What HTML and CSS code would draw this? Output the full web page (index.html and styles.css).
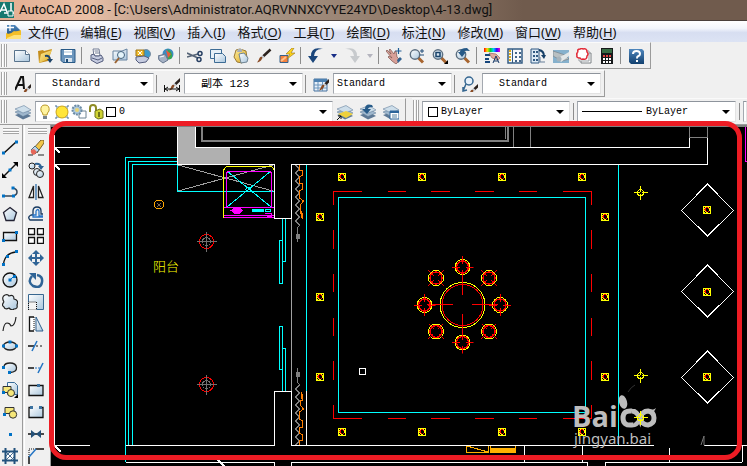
FILE: index.html
```html
<!DOCTYPE html>
<html lang="zh-CN">
<head>
<meta charset="utf-8">
<title>AutoCAD 2008</title>
<link rel="stylesheet" href="styles.css">
</head>
<body>
<svg class="defs" aria-hidden="true">
  <defs>
    <linearGradient id="pane" x1="0" y1="0" x2="1" y2="1"><stop offset="0" stop-color="#fff"/><stop offset="1" stop-color="#a9c6dd"/></linearGradient>
    <linearGradient id="gold" x1="0" y1="0" x2="1" y2="1"><stop offset="0" stop-color="#fff0a0"/><stop offset="1" stop-color="#dba51c"/></linearGradient>
    <linearGradient id="navy" x1="0" y1="0" x2="0" y2="1"><stop offset="0" stop-color="#4f87bd"/><stop offset="1" stop-color="#12406f"/></linearGradient>
    <linearGradient id="rainbow"><stop offset="0" stop-color="#f00"/><stop offset=".2" stop-color="#fd0"/><stop offset=".4" stop-color="#0c3"/><stop offset=".6" stop-color="#0cf"/><stop offset=".8" stop-color="#30f"/><stop offset="1" stop-color="#f0c"/></linearGradient>
    <symbol id="brush" viewBox="0 0 16 16"><path d="M14.500 1.500L7 8.500" stroke="#2a211d" stroke-width="2.500"/><path d="M7.500 8L5.500 10" stroke="#c9ced3" stroke-width="3"/><path d="M6.500 9.500Q5 14 1 14.500Q3 12 3.500 10Q5 8 6.500 9.500" fill="#8a4b24"/></symbol>
    <symbol id="lens" viewBox="0 0 16 16"><path d="M9 9.500l5 5" stroke="#a8652f" stroke-width="3"/><circle cx="6" cy="6.500" r="4.700" fill="url(#pane)" stroke="#5d6f80" stroke-width="1.400"/></symbol>
    <symbol id="printer" viewBox="0 0 16 16"><path d="M4 1h6l1 7H5z" fill="#fff" stroke="#737c94"/><path d="M5.500 3h4M6 5h4" stroke="#737c94"/><path d="M2 7l3-1 1 2h4l2-1 2 3v3l-6 2.500L2 12z" fill="#c6cce0" stroke="#535c7c"/><path d="M3 10l6 2 4-2" stroke="#535c7c" fill="none"/></symbol>
    <symbol id="layers" viewBox="0 0 16 16"><path d="M0 11l9-3 7 4-8 3.500z" fill="#5d7895"/><path d="M0 8l9-3 7 4-8 3.500z" fill="#9fb7cd" stroke="#597793" stroke-width=".5"/><path d="M0 5l9-3.500L16 6 8 9z" fill="#cddeea" stroke="#66829e" stroke-width=".6"/></symbol>
    <symbol id="spot" viewBox="0 0 8 8"><path d="M0 0h8v8H0z" fill="#ff0"/><path d="M1 1h1v1H1zM6 1h1v1H6zM1 5h1v1H1zM6 5h1v2H5V6h1zM2 6h1v1H2zM3 2h2v1h1v2H5v1H3V5H2V3h1z" fill="#000"/><path d="M3 1h2v1H3zM2 2h1v1H2zM1 3h2v1H1zM2 4h1v1H2zM3 5h1v1H3zM5 2h1v1H5zM5 5h1v1H5z" fill="#f00"/></symbol>
    <symbol id="seat" viewBox="0 0 22 22"><circle cx="11" cy="11" r="7.500" stroke="#ff0"/><circle cx="11" cy="11" r="6" stroke="#f00" stroke-width="1.500"/><path d="M11 0v8M11 14v8M0 11h8M14 11h8" stroke="#f00"/></symbol>
    <symbol id="target" viewBox="0 0 22 22"><circle cx="11" cy="11" r="7" stroke="#f00"/><circle cx="11" cy="11" r="4" stroke="#707070"/><path d="M11 1v20M1 11h20" stroke="#707070"/></symbol>
    <symbol id="lamp" viewBox="0 0 16 16"><circle cx="8" cy="8" r="3" stroke="#ff0"/><path d="M8 1v6M8 9v6M1 8h6M9 8h6" stroke="#ff0"/></symbol>
  </defs>
</svg>
<div class="app">
  <header class="title">
    <svg class="title-icon" viewBox="0 0 14 16" aria-hidden="true"><path d="M0 0h14v16H0z" fill="#16796f"/><path d="M0 10L4 2l3 8M1 8h5M11 1v11M4 11h10" stroke="#fff" stroke-width="1.500" fill="none"/><path d="M8 9h5v5H8z" fill="#16796f" stroke="#fff"/></svg>
    <h1>AutoCAD 2008 - [C:\Users\Administrator.AQRVNNXCYYE24YD\Desktop\4-13.dwg]</h1>
  </header>
  <nav class="menu">
    <svg class="menu-icon" viewBox="0 0 16 16" aria-hidden="true"><path d="M1 1h8l5 5v9H1z" fill="url(#navy)"/><path d="M4 0v7M0 3.500h8" stroke="#fff" stroke-width="1.300"/><path d="M0 9q4 2 8-2 2 1 7-1v9H0z" fill="#f4bf28"/><path d="M1 14l7-3h7v4H1z" fill="#ffe37c"/></svg>
    <button>文件(<u>F</u>)</button><button>编辑(<u>E</u>)</button><button>视图(<u>V</u>)</button><button>插入(<u>I</u>)</button><button>格式(<u>O</u>)</button><button>工具(<u>T</u>)</button><button>绘图(<u>D</u>)</button><button>标注(<u>N</u>)</button><button>修改(<u>M</u>)</button><button>窗口(<u>W</u>)</button><button>帮助(<u>H</u>)</button>
  </nav>

  <div class="dock">
    <div class="bar">
      <span class="grip"></span>
      <button class="tool" aria-label="新建"><svg viewBox="0 0 16 16"><path d="M.500 2.500h11l4 4v7H.500z" fill="url(#pane)" stroke="#58738c"/><path d="M11.500 2.500v4h4" fill="#fff" stroke="#58738c"/></svg></button>
      <button class="tool" aria-label="打开"><svg viewBox="0 0 16 16"><path d="M1 3l5-1 1 1 8-2-4 12-9 2z" fill="#c58e1c"/><path d="M4 6l11-4-4 9-9 4z" fill="url(#gold)"/><path d="M8 8q5-1 5 4" stroke="#1d4368" stroke-width="2" fill="none"/><path d="M10 11h6l-3 4z" fill="#1d4368"/></svg></button>
      <button class="tool" aria-label="保存"><svg viewBox="0 0 16 16"><path d="M1 1.500h14v13H3l-2-2z" fill="#6c96bd" stroke="#285985"/><path d="M4 2h8v5H4z" fill="#fff"/><path d="M4 4h8" stroke="#aac3d8"/><path d="M5 10h7v4H5z" fill="#d6e2ed"/><path d="M6 11h2v3H6z" fill="#204c76"/></svg></button>
      <span class="rule"></span>
      <button class="tool" aria-label="打印"><svg viewBox="0 0 16 16"><use href="#printer"/></svg></button>
      <button class="tool" aria-label="打印预览"><svg viewBox="0 0 16 16"><path d="M1 3h9l5-2v11H1z" fill="url(#pane)" stroke="#6683a0"/><circle cx="9" cy="7" r="3.500" fill="#e4f4fa" stroke="#44627d"/><path d="M7 10l-4 5" stroke="#9b6331" stroke-width="2"/></svg></button>
      <button class="tool" aria-label="发布"><svg viewBox="0 0 16 16"><circle cx="11" cy="6" r="4.500" fill="#3c9acb" stroke="#7c8da0"/><path d="M1 2h8v6H1z" fill="#f3bd29" stroke="#9c7418"/><path d="M3 3l4 4M7 3L3 7" stroke="#fff"/><path d="M1 9l8-1 5 2-3 4-7 1-3-3z" fill="#c6cce0" stroke="#535c7c"/></svg></button>
      <button class="tool" aria-label="三维 DWF"><svg viewBox="0 0 16 16"><circle cx="10" cy="6" r="5.500" fill="#3b8bc1"/><path d="M9 1q6 2 5 9-2 2-5 1 3-6 0-10" fill="#36a64d"/><path d="M8 2l5 4-3 4z" fill="#ea5b38"/><path d="M0 8l7-2 3 6-5 3-4-3z" fill="#a4b1c4" stroke="#65758d"/><path d="M2 9l4-1" stroke="#fff"/></svg></button>
      <span class="rule"></span>
      <button class="tool" aria-label="剪切"><svg viewBox="0 0 16 16" fill="none"><path d="M0 5l11 5M0 9l11-3" stroke="#566477" stroke-width="1.600"/><circle cx="13" cy="5.500" r="2" stroke="#273f62" stroke-width="1.500"/><circle cx="12" cy="11.500" r="2" stroke="#273f62" stroke-width="1.500"/></svg></button>
      <button class="tool" aria-label="复制"><svg viewBox="0 0 16 16"><path d="M.500 1.500h11v9H.500z" fill="#e6f0f7" stroke="#3d6c95"/><path d="M4.500 5.500h8l3 3v6h-11z" fill="url(#pane)" stroke="#3d6c95"/></svg></button>
      <button class="tool" aria-label="粘贴"><svg viewBox="0 0 16 16"><path d="M3 2l4-1 6 2 1 7-5 5-5-1-3-5z" fill="url(#gold)" stroke="#9a7a35"/><path d="M5 1h4v3H4z" fill="#a8afb6"/><path d="M6 6l5-1 4 5-1 4-6 1z" fill="url(#pane)" stroke="#6f8494"/></svg></button>
      <button class="tool" aria-label="特性匹配"><svg viewBox="0 0 16 16"><use href="#brush"/></svg></button>
      <button class="tool" aria-label="块编辑器"><svg viewBox="0 0 16 16"><path d="M1 7.500h8v7H1z" fill="#f5813d" stroke="#35618b"/><path d="M2 13l5-4" stroke="#ffc08a" stroke-width="2"/><path d="M13 0L7 6h4L8 11l8-6h-4l3-5z" fill="#ffd519" stroke="#99731b" stroke-width=".6"/></svg></button>
      <span class="rule"></span>
      <button class="tool" aria-label="放弃"><svg viewBox="0 0 16 16"><path d="M15 1Q7 0 6 8h4l-5 7-5-7h3Q3-2 15 1" fill="#1b467b"/></svg></button>
      <button class="tool mini" aria-label="放弃列表"><svg viewBox="0 0 8 8"><path d="M1 2h6L4 6z" fill="#182e87"/></svg></button>
      <button class="tool" aria-label="重做"><svg viewBox="0 0 16 16"><path d="M1 1Q9 0 10 8H6l5 7 5-7h-3Q13-2 1 1" fill="#c7cacd"/></svg></button>
      <button class="tool mini" aria-label="重做列表"><svg viewBox="0 0 8 8"><path d="M1 2h6L4 6z" fill="#b4b4be"/></svg></button>
      <span class="rule"></span>
      <button class="tool" aria-label="实时平移"><svg viewBox="0 0 16 16"><path d="M0 3l1-1 4 4-2-4 1-1 4 5 1-3h1l1 6 3 3-4 4-4-3-4-4 1-1 3 2z" fill="#d8a098" stroke="#7e554e" stroke-width=".7"/><path d="M11 12l3-3 2 2-4 4z" fill="#326290"/><path d="M12.500 0v6M9.500 3h6" stroke="#235f96" stroke-width="1.200"/></svg></button>
      <button class="tool" aria-label="实时缩放"><svg viewBox="0 0 16 16"><use href="#lens"/><path d="M13 1v4M11 3h4M11 7h4" stroke="#214c78"/></svg></button>
      <button class="tool" aria-label="窗口缩放"><svg viewBox="0 0 16 16"><use href="#lens"/><path d="M4 4.500h4v4H4z" fill="none" stroke="#19436b" stroke-width="1.500"/><path d="M16 12v4h-4z"/></svg></button>
      <button class="tool" aria-label="缩放上一个"><svg viewBox="0 0 16 16"><use href="#lens"/><path d="M12 0q-7 0-7 4H3l4 5 4-5H9q0-2 6-1z" fill="#265987"/></svg></button>
      <span class="rule"></span>
      <button class="tool" aria-label="特性"><svg viewBox="0 0 16 16"><path d="M0 0h16v4H0z" fill="url(#rainbow)"/><path d="M1 7h5M1 11h4M1 14h5" stroke="#16467c" stroke-width="2"/><path d="M5 5l7 1 4 4-2 2-6-2z" fill="#e2a99d" stroke="#85564c" stroke-width=".6"/><path d="M9 15l3-7 3 7M10 13h4" stroke="#173967" fill="none"/></svg></button>
      <button class="tool" aria-label="设计中心"><svg viewBox="0 0 16 16"><path d="M1 1h14v14H1z" fill="#f5f8fb" stroke="#345c84" stroke-width="1.500"/><path d="M5.500 1v14" stroke="#345c84"/><path d="M2 3h2M2 6h2M2 9h2M2 12h2" stroke="#dba91c" stroke-width="2"/><path d="M8 4h2v2H8zm4 0h2v2h-2zM8 8h2v2H8zm4 0h2v2h-2zm-4 4h2v2H8zm4 0h2v2h-2z" fill="#446589"/></svg></button>
      <button class="tool" aria-label="工具选项板"><svg viewBox="0 0 16 16"><path d="M1 1h8v14H1z" fill="#dce9f4" stroke="#315982"/><path d="M3 3h2v2H3zm3 0h2v2H6zM3 7h2v2H3zm3 0h2v2H6zM3 11h2v2H3zm3 0h2v2H6z" fill="#315982"/><path d="M9 2q5 1 5 6" fill="none" stroke="#173f67" stroke-width="2"/><path d="M11 7h5l-2 4z" fill="#173f67"/><path d="M10 9v5h5" stroke="#667f99" fill="none"/></svg></button>
      <button class="tool" aria-label="图纸集"><svg viewBox="0 0 16 16"><path d="M0 2h16v13H0z" fill="#86b1cd"/><path d="M0 3l12 4 4 4-7 2L0 8z" fill="#b9c0c2" stroke="#79848c" stroke-width=".7"/><path d="M5 10q6-3 11-6v4l-8 6z" fill="#e3e7e8"/><circle cx="6" cy="11" r="2.500" fill="#a6b3bb"/></svg></button>
      <button class="tool" aria-label="标记集"><svg viewBox="0 0 16 16"><path d="M5 5h10v10H5z" fill="#fff" stroke="#7b8084"/><path d="M3 3h10v10H3z" fill="#fff" stroke="#9aa0a5"/><path d="M2 4q-1-3 2-3 2-1 3 0 4-1 4 3 2 2 0 4 0 4-4 3-2 1-3-1-4 0-3-3-1-1 1-3" fill="#fff" stroke="#e22835" stroke-width="1.500"/></svg></button>
      <button class="tool" aria-label="计算器"><svg viewBox="0 0 16 16"><path d="M2 0h12v16H2z" fill="#17191b"/><path d="M3 1h10v4H3z" fill="#386c44"/><path d="M4 7h2v2H4zm3 0h2v2H7zm3 0h2v2h-2z" fill="#e34141"/><path d="M4 10h2v2H4zm3 0h2v2H7zm3 0h2v2h-2zm-6 3h2v2H4zm3 0h2v2H7zm3 0h2v2h-2z" fill="#fff"/></svg></button>
      <span class="rule"></span>
      <button class="tool" aria-label="帮助"><svg viewBox="0 0 16 16"><path d="M1 1h13l2 2v13H3l-2-2z" fill="url(#navy)"/><path d="M5 6q0-3 3.500-3T12 6q0 1.500-2 2.300-1 .4-1 2.200" fill="none" stroke="#fff" stroke-width="2"/><path d="M8 12h2v2H8z" fill="#fff"/></svg></button>
    </div>
  </div>

  <div class="dock">
    <div class="bar styles">
      <span class="grip"></span>
      <button class="tool wide" aria-label="文字样式"><svg viewBox="0 0 16 16"><path d="M0 14L6 1h2l1 12M3 9h6" stroke="#111" stroke-width="2" fill="none"/><svg x="6" y="4" width="11" height="12"><use href="#brush"/></svg></svg></button>
      <div class="combo inset"><select aria-label="文字样式"><option>Standard</option></select></div>
      <span class="rule"></span>
      <button class="tool wide" aria-label="标注样式"><svg viewBox="0 0 16 16"><svg x="4" y="0" width="12" height="12"><use href="#brush"/></svg><path d="M.500 9v7M15.500 9v7M1 13h14M4 11l-3 2 3 2M12 11l3 2-3 2" stroke="#111" fill="none"/></svg></button>
      <div class="combo inset cjk"><select aria-label="标注样式"><option>副本 123</option></select></div>
      <span class="rule"></span>
      <button class="tool wide" aria-label="表格样式"><svg viewBox="0 0 16 16"><path d="M1 3h13v12H1z" fill="#e7f0fa" stroke="#46739f"/><path d="M1 3h13v3H1z" fill="#4e81b1"/><path d="M1 9h13M1 12h13M5 6v9M9.500 6v9" stroke="#6b94bb"/><svg x="5" y="0" width="12" height="12"><use href="#brush"/></svg></svg></button>
      <div class="combo"><select aria-label="表格样式"><option>Standard</option></select></div>
      <span class="rule"></span>
      <button class="tool wide" aria-label="多重引线样式"><svg viewBox="0 0 16 16"><circle cx="7" cy="5" r="4" fill="#e8f1fa" stroke="#356690" stroke-width="1.500"/><path d="M4 8l-3 7M1 11v4l4-1" stroke="#356690" stroke-width="1.500" fill="none"/><svg x="5" y="5" width="11" height="11"><use href="#brush"/></svg></svg></button>
      <div class="combo inset"><select aria-label="多重引线样式"><option>Standard</option></select></div>
    </div>
  </div>

  <div class="dock layers">
    <div class="bar">
      <span class="grip"></span>
      <button class="tool wide" aria-label="图层特性管理器"><svg viewBox="0 0 16 16"><use href="#layers"/></svg></button>
      <div class="combo layer">
        <svg class="state" viewBox="0 0 16 16" aria-hidden="true"><path d="M6 11q0-2-2-4-1-6 4-6t4 6q-2 2-2 4z" fill="#fff4a0" stroke="#b99827"/><path d="M6 12h4v3H6z" fill="#77838f"/></svg>
        <svg class="state" viewBox="0 0 16 16" aria-hidden="true"><path d="M2 2h12v12H2z" fill="#a9bed0"/><circle cx="8" cy="8" r="6" fill="#ffe53a" stroke="#d1a91d"/><path d="M2 1v2M14 1v2M2 13v2M14 13v2" stroke="#436c93"/></svg>
        <svg class="state" viewBox="0 0 16 16" aria-hidden="true"><path d="M8 7h7v7H8z" fill="#fff" stroke="#6f8493"/><circle cx="6" cy="6" r="4.500" fill="#abc7dc" stroke="#6b8ba5" stroke-width="2" stroke-dasharray="2 1"/><circle cx="6" cy="6" r="2" fill="#e9d577"/></svg>
        <svg class="state" viewBox="0 0 16 16" aria-hidden="true"><path d="M2 8V4q0-3 3-3t3 3v4" fill="none" stroke="#8e8b24" stroke-width="2"/><path d="M7 7l5-2 3 2v7l-5 1-3-2z" fill="#cfd334" stroke="#6f741b"/><path d="M11 8v5" stroke="#6f741b" stroke-width="2"/></svg>
        <span class="swatch"></span>
        <select aria-label="图层"><option>0</option></select>
      </div>
      <button class="tool" aria-label="置为当前图层"><svg viewBox="0 0 16 16"><use href="#layers"/><path d="M1 10l8-3 7 3-7 4z" fill="#eed03c"/><path d="M0 16l4-4M1 12h3v3" stroke="#111" fill="none"/></svg></button>
      <button class="tool" aria-label="上一个图层"><svg viewBox="0 0 16 16"><use href="#layers"/><path d="M12 1Q5-1 5 5H2l5 5 4-5H8q0-2 5-2z" fill="#275b89"/></svg></button>
      <button class="tool" aria-label="图层状态管理器"><svg viewBox="0 0 16 16"><use href="#layers"/><path d="M7 7h9v8H7z" fill="#fff" stroke="#2c649a"/><path d="M7 8h9" stroke="#2c649a" stroke-width="2"/><path d="M9 11h5M9 13h5" stroke="#58819f"/></svg></button>
    </div>
    <div class="bar props">
      <span class="grip"></span>
      <div class="combo color"><span class="swatch"></span><select aria-label="颜色"><option>ByLayer</option></select></div>
      <span class="rule"></span>
      <div class="combo linetype"><span class="stroke"></span><select aria-label="线型"><option>ByLayer</option></select></div>
      <span class="rule"></span>
      <div class="combo rest"></div>
    </div>
  </div>

  <main class="work">
    <div class="palette draw">
      <span class="grip"></span>
      <button class="tool" aria-label="直线"><svg viewBox="0 0 16 16"><path d="M2 13L14 2" stroke="#111" stroke-width="1.500"/><path d="M0 11.500h3v3H0zM13 .500h3v3h-3z" fill="#0072c6"/></svg></button>
      <button class="tool" aria-label="构造线"><svg viewBox="0 0 16 16"><path d="M1 15L15 1" stroke="#111" stroke-width="1.500"/><path d="M0 16v-5l5 5zM16 0v5l-5-5z"/><path d="M6.500 6.500h3v3h-3z" fill="#0072c6"/></svg></button>
      <button class="tool" aria-label="多段线"><svg viewBox="0 0 16 16"><path d="M1 12h10q4-1 4-4t-4-4" fill="none" stroke="#345" stroke-width="1.500"/><path d="M0 10.500h3v3H0zM10 10.500h3v3h-3zM9.500 2.500h3v3h-3z" fill="#0072c6"/></svg></button>
      <button class="tool" aria-label="正多边形"><svg viewBox="0 0 16 16"><path d="M8 1.500L14.500 6.500 12 14.500H4L1.500 6.500z" fill="url(#pane)" stroke="#223" stroke-width="1.300"/></svg></button>
      <button class="tool" aria-label="矩形"><svg viewBox="0 0 16 16"><path d="M1.500 4.500h13v8h-13z" fill="url(#pane)" stroke="#111" stroke-width="1.300"/><path d="M0 11h3v3H0zM13 3h3v3h-3z" fill="#0072c6"/></svg></button>
      <button class="tool" aria-label="圆弧"><svg viewBox="0 0 16 16"><path d="M1.500 14Q3 3 14 2" fill="none" stroke="#111" stroke-width="1.300"/><path d="M0 13h3v3H0zM4 5h3v3H4zM13 0h3v3h-3z" fill="#0072c6"/></svg></button>
      <button class="tool" aria-label="圆"><svg viewBox="0 0 16 16"><circle cx="8" cy="8" r="7" fill="url(#pane)" stroke="#111" stroke-width="1.300"/><path d="M8 8l4-4" stroke="#0072c6"/><path d="M6.500 6.500h3v3h-3zM11 3h3v3h-3z" fill="#0072c6"/></svg></button>
      <button class="tool" aria-label="修订云线"><svg viewBox="0 0 16 16"><path d="M2 8Q-1 3 3 1q3-1 4 1 5-2 5 3 5 1 3 6 1 4-3 4-2 2-5-1-4 2-5-1-3-2 0-5" fill="url(#pane)" stroke="#222" stroke-width="1.200"/></svg></button>
      <button class="tool" aria-label="样条曲线"><svg viewBox="0 0 16 16"><path d="M1 15Q2 7 5 7t4 3q4 0 5-9" fill="none" stroke="#222" stroke-width="1.200"/></svg></button>
      <button class="tool" aria-label="椭圆"><svg viewBox="0 0 16 16"><ellipse cx="8" cy="8" rx="6.500" ry="4" fill="url(#pane)" stroke="#222" stroke-width="1.300"/><path d="M0 6.500h3v3H0zM13 6.500h3v3h-3zM6.500 2.500h3v3h-3z" fill="#0072c6"/></svg></button>
      <button class="tool" aria-label="椭圆弧"><svg viewBox="0 0 16 16"><path d="M2 6q1-3 6-3 6 0 6.500 4.500T8 12.500" fill="url(#pane)" stroke="#222" stroke-width="1.300"/><path d="M0 6h3v3H0zM6 11h3v3H6z" fill="#0072c6"/></svg></button>
      <button class="tool" aria-label="插入块"><svg viewBox="0 0 16 16"><path d="M5.500 .500h7l3 3v9h-10z" fill="url(#pane)" stroke="#386b98"/><path d="M1 4.500h8v6H1z" fill="#f6e779" stroke="#333"/><circle cx="9" cy="11" r="3.500" fill="#f6e779" stroke="#333"/><path d="M16 12v4h-4z"/><path d="M0 9h3v3H0z" fill="#0072c6"/></svg></button>
      <button class="tool" aria-label="创建块"><svg viewBox="0 0 16 16"><path d="M3 3.500h9v6H3z" fill="#f6e779" stroke="#333"/><circle cx="11" cy="10.500" r="3.700" fill="#f6e779" stroke="#333"/><path d="M1 9h3v3H1z" fill="#0072c6"/></svg></button>
      <button class="tool" aria-label="点"><svg viewBox="0 0 16 16"><path d="M7 7h3v3H7z" fill="#0072c6"/></svg></button>
      <button class="tool" aria-label="图案填充"><svg viewBox="0 0 16 16"><path d="M4 4h9v9H4z" fill="#fff"/><path d="M4 8l4-4M4 12l8-8M8 13l5-5M4 4l9 9" stroke="#4d7092"/><path d="M3.500 0v16M12.500 0v16M0 3.500h16M0 12.500h16" stroke="#23527d" stroke-width="2"/></svg></button>
    </div>
    <div class="palette modify">
      <span class="grip"></span>
      <button class="tool" aria-label="删除"><svg viewBox="0 0 16 16"><path d="M5 9l8-9h3v3L9 13z" fill="#f1c74b" stroke="#775f2c"/><path d="M3 10l4-4 4 4-4 4z" fill="#b9d4e8" stroke="#4e6e82"/><path d="M3 10l3-1 3 3-3 3q-4-1-3-5" fill="#e56658"/><path d="M0 15h5M10 15h6" stroke="#222"/></svg></button>
      <button class="tool" aria-label="复制对象"><svg viewBox="0 0 16 16"><circle cx="4" cy="4" r="3" fill="url(#pane)" stroke="#222"/><circle cx="9" cy="10" r="3.500" fill="url(#pane)" stroke="#222"/><circle cx="12" cy="12" r="3.500" fill="url(#pane)" stroke="#222"/><path d="M7 2q5-1 6 3" fill="none" stroke="#2e6294" stroke-width="2"/><path d="M10 4h6l-3 4z" fill="#2e6294"/></svg></button>
      <button class="tool" aria-label="镜像"><svg viewBox="0 0 16 16"><path d="M5.500 2v11.500H1zM10.500 2v11.500H15z" fill="#fff" stroke="#222" stroke-width="1.300"/><path d="M8 0v16" stroke="#2e6eaa" stroke-width="1.300"/></svg></button>
      <button class="tool" aria-label="偏移"><svg viewBox="0 0 16 16" fill="none"><path d="M15 14H2q-3-3 1-5h2V5q0-4 4-4t4 4v3h2" stroke="#183a60" stroke-width="1.300"/><path d="M15 11H5V9h3V5q2-3 3 0v5h4" stroke="#2976c7" stroke-width="1.300"/></svg></button>
      <button class="tool" aria-label="阵列"><svg viewBox="0 0 16 16"><path d="M.500 .500h6v6h-6zm9 0h6v6h-6zm-9 9h6v6h-6zm9 0h6v6h-6z" fill="#fff" stroke="#111" stroke-width="1.300"/></svg></button>
      <button class="tool" aria-label="移动"><svg viewBox="0 0 16 16"><path d="M8 0l4 4H9v3h3V4l4 4-4 4V9H9v3h3l-4 4-4-4h3V9H4v3L0 8l4-4v3h3V4H4z" fill="#2f6496"/></svg></button>
      <button class="tool" aria-label="旋转"><svg viewBox="0 0 16 16"><path d="M4 4Q-1 10 5 14q8 3 9-4 1-6-5-7" fill="none" stroke="#2f6496" stroke-width="2.500"/><path d="M1 1h7v7z" fill="#2f6496"/></svg></button>
      <button class="tool" aria-label="缩放"><svg viewBox="0 0 16 16"><path d="M.500 .500h15v15H.500z" fill="url(#pane)" stroke="#386790"/><path d="M.500 8h8v8h-8z" fill="#f4f4f4" stroke="#111" stroke-dasharray="1 1"/></svg></button>
      <button class="tool" aria-label="拉伸"><svg viewBox="0 0 16 16"><path d="M1.500 1H6v14H1.500z" fill="#fff"/><path d="M6 1H1.500v14H6" fill="none" stroke="#111" stroke-width="1.300"/><path d="M6 1v14" stroke="#111" stroke-dasharray="1 1"/><path d="M8 1v14h7z" fill="url(#pane)" stroke="#2c5f8d"/></svg></button>
      <button class="tool" aria-label="修剪"><svg viewBox="0 0 16 16"><path d="M0 8h6" stroke="#111" stroke-width="1.500"/><path d="M8 8h8" stroke="#111" stroke-dasharray="2 2"/><path d="M4 13l5-10" stroke="#2475c4" stroke-width="1.500"/></svg></button>
      <button class="tool" aria-label="延伸"><svg viewBox="0 0 16 16"><path d="M0 8h6" stroke="#111" stroke-width="1.500"/><path d="M7 8h5" stroke="#2475c4" stroke-dasharray="2 1"/><path d="M10 13l5-10" stroke="#2475c4" stroke-width="1.500"/></svg></button>
      <button class="tool" aria-label="打断于点"><svg viewBox="0 0 16 16"><path d="M1 3.500h14v10H1z" fill="url(#pane)" stroke="#111" stroke-width="1.300"/><path d="M9 2h3v3H9z" fill="#3b719f"/></svg></button>
      <button class="tool" aria-label="打断"><svg viewBox="0 0 16 16"><path d="M1 3h14v11H1z" fill="url(#pane)"/><path d="M4 3.500H1v10h14v-10h-3" fill="none" stroke="#111" stroke-width="1.300"/><path d="M2 2h3v3H2zM11 2h3v3h-3z" fill="#3b719f"/></svg></button>
      <button class="tool" aria-label="合并"><svg viewBox="0 0 16 16"><path d="M0 8h16" stroke="#111" stroke-width="1.500"/><path d="M3 4l5 4-5 4zM13 4L8 8l5 4z" fill="#234f77"/></svg></button>
      <button class="tool" aria-label="倒角"><svg viewBox="0 0 16 16"><path d="M1 16V8M8 1h8" stroke="#111" stroke-width="1.500"/><path d="M1 7V1h7" fill="none" stroke="#111" stroke-dasharray="1 1"/><path d="M1 9l7-8" stroke="#2475c4" stroke-width="1.500"/></svg></button>
    </div>

    <div class="canvas">
      <svg class="drawing" fill="none" shape-rendering="crispEdges" role="img" aria-label="平面图">
        <g transform="translate(-51 -127)">
          <path d="M177 127h19v21h34v17h-53z" fill="#b0b0b0"/>
          <g stroke="#808080">
            <path d="M202 127v14h305.500v-14" stroke-width="2"/>
            <path d="M505.500 127v12M513.500 127v20M530.500 127v20M689.500 137.500h18M689.500 127v11M707.500 127v11"/>
            <path d="M178 165l95 26M178 191l95-26M291.500 219v172" stroke="#a0a0a0"/>
            <path d="M295.500 165l4 4-4 4 4 4-4 4 4 4-4 4 4 4-4 4 4 4-4 4 4 4-4 4 4 4-4 4 4 4-2 3v14"/>
            <path d="M295.500 445l4-4-4-4 4-4-4-4 4-4-4-4 4-4-4-4 4-4-4-4 4-4-4-4 4-4-4-4 4-4-2-3v-14"/>
            <path d="M296 234h3v4h-3zM296 372h3v4h-3z" fill="#808080"/>
          </g>
          <path d="M299.500 165v5h3v5l-3 2v6h3v6l-3 2v7l4 3-3 4v8h2v6M301 211v7M299.500 445v-5h3v-5l-3-2v-6h3v-6l-3-2v-7l4-3-3-4v-5h2v-6M301 399v-7" stroke="#ff7f00"/>
          <g stroke="#0ff">
            <path d="M177 157.500h-51.500V462M177 161.500h-48.500V445M177 164.500h-44.500V445"/>
            <path d="M177.500 165v26.500h96"/>
            <path d="M338.500 197.500h247v215h-247zM306.500 165v227M618.500 165v280"/>
            <path d="M279.500 240.500h3v43h-3zM282.500 219v42.500h3V219M279.500 326.500h3v43h-3zM282.500 391v-42.500h3V391"/>
            <path d="M227 171l44 36M271 171l-44 36"/><circle cx="248.500" cy="189.500" r="2.500"/>
            <path d="M265.500 209.500h5v2h-5z"/><path d="M252 209h12v3h-12z" fill="#0ff" stroke="none"/>
          </g>
          <g stroke="#f0f"><path d="M226.500 207v-34l2-2h41l2 2v34M224 207.500h50M224 215.500h50M224 217.500h50M265 213.500h6v3h-4"/><ellipse cx="237" cy="210.500" rx="5" ry="3" fill="#f0f"/><path d="M230 210.500h13M745.500 127v34h2"/></g>
          <path d="M223.500 218v-48l3-3.500h45l2.500 3" stroke="#ff0"/>
          <g stroke="#fff">
            <path d="M177.500 127v37.500h97v54h17v-54h416V138M195.500 127v20.500h494V138"/>
            <path d="M54.500 135v311M54 147.500h36M54 164.500h36M55 445.500h35M126 445.500h148.500v-54h17v54H742M306.500 391v54"/>
            <path d="M126 462.500h148.500v4M291.500 466v-3.500h296v4M605.500 466v-3.500H742M524.500 445v17M582.500 445v17M669.500 445v17M742.500 445v17M742 445.500h5"/>
            <path d="M55 148l5 5M55 165l5 5M55 446l6 6M218 460l7 7" stroke-width="2"/>
            <path d="M359.500 368.500h6v6h-6zM707.500 184l26 26.500-26 25.500-26-25.500zM707.500 265l26 26.500-26 25.500-26-25.500zM707.500 351l26 26.500-26 25.500-26-25.500z"/>
          </g>
          <g stroke="#f00">
            <path d="M333.500 205v-13.500H362M388 191.500h18M431 191.500h19M475 191.500h19M519 191.500h18M563 191.500h28.500V205"/>
            <path d="M333.500 230v19M333.500 274v18M333.500 318v18M333.500 361v19M591.500 230v19M591.500 274v18M591.500 318v18M591.500 361v19"/>
            <path d="M333.500 405v13.500H362M388 418.500h18M431 418.500h19M475 418.500h19M519 418.500h18M563 418.500h28.500V405"/>
          </g>
          <circle cx="462.500" cy="305" r="22.500" stroke="#ff0"/><circle cx="462.500" cy="305" r="20.500" stroke="#f00"/>
          <path d="M462.500 270v25M462.500 314v25M427 304.500h26M472 304.500h26" stroke="#f00"/>
          <g>
            <use href="#seat" x="451.500" y="256" width="22" height="22"/><use href="#seat" x="451.500" y="331.500" width="22" height="22"/>
            <use href="#seat" x="413.500" y="294" width="22" height="22"/><use href="#seat" x="489" y="294" width="22" height="22"/>
            <g transform="rotate(45 436 278)"><use href="#seat" x="425" y="267" width="22" height="22"/></g>
            <g transform="rotate(45 489 278)"><use href="#seat" x="478" y="267" width="22" height="22"/></g>
            <g transform="rotate(45 436 331.500)"><use href="#seat" x="425" y="320.500" width="22" height="22"/></g>
            <g transform="rotate(45 489 331.500)"><use href="#seat" x="478" y="320.500" width="22" height="22"/></g>
          </g>
          <use href="#target" x="195.500" y="230.500" width="22" height="22"/><use href="#target" x="195.500" y="373.500" width="22" height="22"/>
          <circle cx="159" cy="204.500" r="4.500" stroke="#ffa500"/><path d="M157 203l4 4M161 203l-4 4" stroke="#806850"/>
          <text class="room" x="153" y="271">阳台</text>
          <g>
            <use href="#spot" x="338" y="173" width="8" height="8"/><use href="#spot" x="418" y="173" width="8" height="8"/><use href="#spot" x="498" y="173" width="8" height="8"/><use href="#spot" x="578" y="173" width="8" height="8"/>
            <use href="#spot" x="316" y="213" width="8" height="8"/><use href="#spot" x="316" y="293" width="8" height="8"/><use href="#spot" x="316" y="373" width="8" height="8"/>
            <use href="#spot" x="601" y="213" width="8" height="8"/><use href="#spot" x="601" y="293" width="8" height="8"/><use href="#spot" x="601" y="373" width="8" height="8"/>
            <use href="#spot" x="338" y="428" width="8" height="8"/><use href="#spot" x="418" y="428" width="8" height="8"/><use href="#spot" x="498" y="428" width="8" height="8"/><use href="#spot" x="578" y="428" width="8" height="8"/>
            <use href="#spot" x="703" y="206" width="8" height="8"/><use href="#spot" x="703" y="288" width="8" height="8"/><use href="#spot" x="703" y="373" width="8" height="8"/>
          </g>
          <path d="M466.500 446v6.500h22V446M467 446l21 6" stroke="#ffb000"/><path d="M490 448h26v5h-26z" fill="#ffb000"/><path d="M490.500 446v3M515.500 446v3" stroke="#ffb000"/>
          <g shape-rendering="auto">
            <path d="M654 446V420l4-16h40l7 20v20l-2 4h-48z" fill="#000"/>
            <g fill="#bdbdbd"><text class="brand" x="572" y="427">Bai</text><text class="site" x="574" y="444">jingyan.bai</text>
            <ellipse cx="623" cy="402" rx="4" ry="7" transform="rotate(-15 623 402)"/><path d="M648 409q5 2 8-1-4 9-8 1"/></g>
            <path d="M632 411q-9-1-9 7t9 7q5 0 8-6 3 6 8 6 6-1 6-7t-6-7q-6 0-8 8-3-8-8-8" stroke="#bdbdbd" stroke-width="5"/>
            <path d="M634 417v5l4-4M645 415v6" stroke="#000" stroke-width="1.500"/>
            <path d="M628 392q3-5 7-7" stroke="#333"/><path d="M701 445l3-9v9" stroke="#777"/>
          </g>
          <use href="#lamp" x="632.500" y="184.500" width="16" height="16"/><use href="#lamp" x="632.500" y="367.500" width="16" height="16"/><use href="#lamp" x="632.500" y="409.500" width="16" height="16"/>
        </g>
      </svg>
    </div>
    <div class="highlight"></div>
  </main>
</div>
</body>
</html>
```
FILE: styles.css
```css
* { box-sizing: border-box; }
body { margin: 0; background: #f0f0f0; color: #111; font-family: "Noto Sans", "Noto Sans CJK SC", sans-serif; }
button { border: 0; padding: 0; margin: 0; background: none; font: inherit; color: inherit; }
.defs { position: absolute; width: 0; height: 0; }
.app { display: flex; flex-direction: column; height: 100vh; overflow: hidden; }

.title { display: flex; align-items: center; gap: 5px; flex: none; height: 21px; overflow: hidden; border-bottom: 1px solid #4a403b; background: linear-gradient(90deg, #e3ae91, #eac0a7 12%, #c0a18d 20%, #a99585 34%, #8b7464 58%, #705b4d 70%, #705b4d); }
.title h1 { margin: 0; font-family: Roboto, "Noto Sans", sans-serif; font-size: 13px; font-weight: 400; line-height: 20px; white-space: nowrap; }
.title-icon { width: 14px; height: 16px; flex: none; }

.menu { display: flex; align-items: center; flex: none; height: 21px; padding-left: 6px; overflow: hidden; background: linear-gradient(#fff, #f3f6fc 35%, #d7def1 55%, #dce3f4); font-size: 13px; line-height: 20px; }
.menu-icon { width: 16px; height: 16px; flex: none; }
.menu button { flex: none; padding: 0 6px; white-space: nowrap; }
.menu u { text-underline-offset: 2px; }

.dock { display: flex; flex: none; height: 28px; overflow: hidden; background: #f0f0f0; }
.dock.layers { height: 27px; }
.bar { display: flex; align-items: center; flex: none; height: 27px; padding-right: 3px; border-top: 1px solid #fafafa; border-right: 1px solid #9b9b9b; border-bottom: 1px solid #9b9b9b; }
.grip { flex: none; width: 6px; height: 23px; margin: 0 3px 0 1px; border: solid #a5a5a5; border-width: 0 1px; background: linear-gradient(90deg, #fff 1px, transparent 1px 2px, #a5a5a5 2px 3px, #fff 3px); }
.rule { flex: none; width: 1px; height: 17px; margin: 0 3px 0 2px; background: #8d8d8d; }
.tool { display: flex; align-items: center; justify-content: center; flex: none; width: 23px; height: 22px; }
.tool svg { width: 16px; height: 16px; }
.tool.wide { width: 25px; }
.tool.mini { width: 13px; }
.tool.mini svg { width: 8px; height: 8px; }
.styles .rule { margin: 0 2px; height: 18px; }

.combo { position: relative; display: flex; align-items: center; flex: none; width: 119px; height: 21px; border: 1px solid #e3e3e3; border-top-color: #8e949c; border-left-color: #a4a9b0; background: #fff; }
.combo::after { content: ""; position: absolute; right: 5px; top: 8px; border: solid transparent; border-width: 4px 4px 0; border-top-color: #000; pointer-events: none; }
.combo select { flex: 1; min-width: 0; height: 18px; padding: 0 0 0 3px; border: 0; appearance: none; background: none; color: #000; font-family: "Liberation Mono", "Noto Sans CJK SC", monospace; font-size: 10px; }
.combo.inset select { padding-left: 16px; }
.combo.cjk select { font-size: 11px; }
.combo.layer { width: 298px; padding-left: 1px; }
.combo.color { width: 148px; padding-left: 4px; }
.combo.linetype { width: 159px; padding-left: 4px; gap: 1px; }
.combo.rest { flex: 1; }
.combo.rest::after { display: none; }
.state { width: 16px; height: 16px; flex: none; margin-right: 1px; }
.swatch { width: 10px; height: 10px; flex: none; border: 1px solid #000; margin-left: 1px; }
.stroke { width: 60px; height: 1px; flex: none; background: #000; }
.layers .rule { margin: 0 3px; }
.props { flex: 1; min-width: 0; padding: 0; margin-left: 6px; border-right: 0; }

.work { position: relative; display: flex; flex: 1; min-height: 0; }
.palette { display: flex; flex-direction: column; flex: none; overflow: hidden; border-right: 1px solid #9b9b9b; background: #f0f0f0; }
.draw { width: 23px; margin-right: 1px; }
.modify { width: 27px; border-left: 1px solid #fff; }
.palette .grip { width: auto; height: 6px; margin: 3px 3px; border-width: 1px 0; background: linear-gradient(#fff 1px, transparent 1px 2px, #a5a5a5 2px 3px, #fff 3px); }
.palette .tool { width: 20px; }
.modify .tool { width: 22px; }
.canvas { flex: 1; min-width: 0; border-top: 2px solid #808080; background: #000; overflow: hidden; }
.drawing { display: block; width: 100%; height: 100%; }
.room { fill: #ff0; font: 300 13px "Noto Sans CJK SC", sans-serif; }
.brand { font: 700 29px "Open Sans", sans-serif; }
.site { font: 400 15px "Noto Sans", sans-serif; }
.highlight { position: absolute; left: 49px; right: 5px; top: -4px; bottom: 6px; border: 5px solid #ed1c24; border-radius: 17px; pointer-events: none; }
```
